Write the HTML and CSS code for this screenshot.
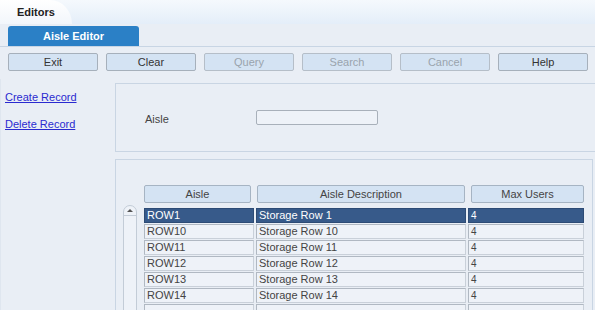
FILE: index.html
```html
<!DOCTYPE html>
<html lang="en">
<head>
    <meta charset="UTF-8">
    <title>Editors</title>
    <link rel="stylesheet" href="styles.css">
</head>
<body>

<div class="topbar">
    <div class="top-tab">Editors</div>
</div>

<div class="tabstrip">
    <div class="tab">Aisle Editor</div>
</div>

<div class="toolbar">
    <button class="btn">Exit</button>
    <button class="btn">Clear</button>
    <button class="btn" disabled>Query</button>
    <button class="btn" disabled>Search</button>
    <button class="btn" disabled>Cancel</button>
    <button class="btn">Help</button>
</div>

<div class="main">
    <div class="side">
        <a href="#" class="link">Create Record</a>
        <a href="#" class="link">Delete Record</a>
    </div>

    <div class="content">
        <div class="panel form-panel">
            <label class="field-label" for="aisle">Aisle</label>
            <input type="text" id="aisle" class="field">
        </div>

        <div class="panel grid-panel">
            <div class="scrollbar">
                <div class="scroll-up"></div>
            </div>
            <div class="table">
                <div class="head">
                    <div class="th">Aisle</div>
                    <div class="th">Aisle Description</div>
                    <div class="th">Max Users</div>
                </div>
                <div class="row selected">
                    <div class="td">ROW1</div>
                    <div class="td">Storage Row 1</div>
                    <div class="td small">4</div>
                </div>
                <div class="row">
                    <div class="td">ROW10</div>
                    <div class="td">Storage Row 10</div>
                    <div class="td small">4</div>
                </div>
                <div class="row">
                    <div class="td">ROW11</div>
                    <div class="td">Storage Row 11</div>
                    <div class="td small">4</div>
                </div>
                <div class="row">
                    <div class="td">ROW12</div>
                    <div class="td">Storage Row 12</div>
                    <div class="td small">4</div>
                </div>
                <div class="row">
                    <div class="td">ROW13</div>
                    <div class="td">Storage Row 13</div>
                    <div class="td small">4</div>
                </div>
                <div class="row">
                    <div class="td">ROW14</div>
                    <div class="td">Storage Row 14</div>
                    <div class="td small">4</div>
                </div>
                <!-- next row is cut off by the window, only its top edge shows -->
                <div class="row">
                    <div class="td"></div>
                    <div class="td"></div>
                    <div class="td"></div>
                </div>
            </div>
        </div>
    </div>
</div>

</body>
</html>
```

FILE: styles.css
```css
body {
    margin: 0;
    font-family: 'Liberation Sans', Arial, sans-serif;
    font-size: 11px;
    color: #444;
    background: #e9eef5;
    overflow: hidden;
    height: 310px;
}
.topbar {
    height: 24px;
    background: linear-gradient(#f5f9fd, #e4eef9);
    display: flex;
}
.top-tab {
    width: 72px;
    padding-left: 17px;
    box-sizing: border-box;
    line-height: 24px;
    font-weight: bold;
    color: #222;
    background: linear-gradient(#ffffff, #f2f6fb);
    border-top-right-radius: 22px 24px;
}
.tabstrip {
    height: 23px;
    padding: 2px 0 0 8px;
    box-sizing: border-box;
    border-bottom: 1px solid #c8d5e4;
}
.tab {
    width: 131px;
    height: 20px;
    line-height: 20px;
    text-align: center;
    color: white;
    font-weight: bold;
    background: #2b80c6;
    border-radius: 3px 3px 0 0;
}
.toolbar {
    display: flex;
    gap: 8px;
    padding: 6px 0 0 8px;
}
.btn {
    width: 90px;
    height: 18px;
    padding: 0;
    font-family: inherit;
    font-size: 11px;
    color: #333;
    background: #d4e3f3;
    border: 1px solid #a6b0bb;
    border-radius: 2px;
}
.btn:disabled {
    color: #9aa3ad;
    border-color: #b5bec8;
}
.main {
    display: flex;
    margin-top: 8px;
}
.side {
    width: 115px;
    flex: none;
    display: flex;
    flex-direction: column;
    gap: 13px;
    padding: 11px 0 0 4px;
    box-sizing: border-box;
    border-left: 1px solid #dfe6ef;
}
.link {
    color: #2a2ad0;
    text-decoration: underline;
    line-height: 14px;
}
.content {
    flex: 1;
    display: flex;
    flex-direction: column;
    gap: 7px;
}
.panel {
    border: 1px solid #c9d5e3;
    border-right: none;
    background: #e9eef5;
}
.form-panel {
    height: 67px;
    display: flex;
    align-items: center;
    padding-left: 29px;
    margin-top: 4px;
}
.field-label {
    width: 111px;
    padding-top: 2px;
}
.field {
    width: 122px;
    height: 15px;
    box-sizing: border-box;
    border: 1px solid #a8b0ba;
    border-radius: 2px;
    background: #eef2f8;
    padding: 0;
}
.grid-panel {
    display: flex;
    padding: 25px 0 0 7px;
    height: 200px;
    margin-right: 2px;
    border-right: 1px solid #c9d5e3;
}
.scrollbar {
    width: 14px;
    height: 120px;
    margin-top: 20px;
    margin-right: 7px;
    box-sizing: border-box;
    border: 1px solid #c3ccd7;
    border-radius: 7px 7px 0 0;
    background: #eef2f8;
}
.scroll-up {
    height: 9px;
    border-bottom: 1px solid #c3ccd7;
    position: relative;
}
.scroll-up::after {
    content: "";
    position: absolute;
    left: 3px;
    top: 3px;
    border-left: 3px solid transparent;
    border-right: 3px solid transparent;
    border-bottom: 3px solid #555;
}
.table {
    display: flex;
    flex-direction: column;
    gap: 1px;
}
.head {
    display: grid;
    grid-template-columns: 107px 208px 113px;
    column-gap: 6px;
    margin-bottom: 4px;
}
.th {
    height: 18px;
    line-height: 16px;
    box-sizing: border-box;
    text-align: center;
    background: #d4e3f3;
    border: 1px solid #a6b4c3;
    border-radius: 2px;
}
.row {
    display: grid;
    grid-template-columns: 110px 210px 116px;
    column-gap: 2px;
}
.td {
    height: 15px;
    line-height: 13px;
    box-sizing: border-box;
    padding-left: 2px;
    background: #eef2f8;
    border: 1px solid #c9d0d9;
    border-top-color: #b0b8c2;
    border-left-color: #b0b8c2;
    white-space: nowrap;
}
.td.small {
    font-size: 10px;
}
.row.selected .td {
    background: #375a8a;
    color: white;
    border-color: #2d4b75;
}
```
